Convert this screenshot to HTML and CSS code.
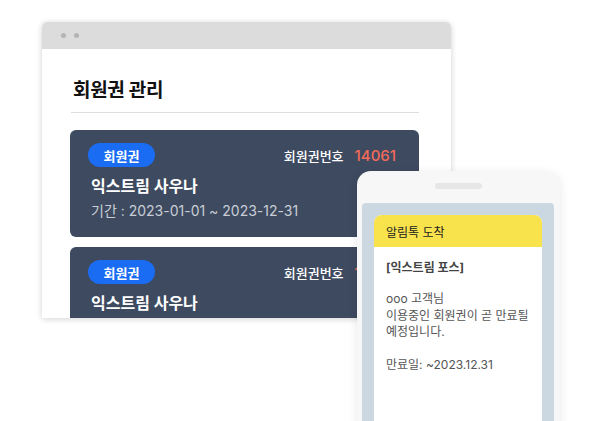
FILE: index.html
```html
<!DOCTYPE html>
<html lang="ko">
<head>
<meta charset="utf-8">
<link rel="stylesheet" href="styles.css">
</head>
<body>
<div class="stage">
  <div class="browser">
    <div class="titlebar"><span class="dot"></span><span class="dot"></span></div>
    <div class="content">
      <h1 class="title">회원권 관리</h1>
      <div class="divider"></div>
      <div class="card">
        <div class="card-top">
          <span class="badge">회원권</span>
          <span class="num-label">회원권번호<b class="num">14061</b></span>
        </div>
        <div class="name">익스트림 사우나</div>
        <div class="period">기간 : 2023-01-01 ~ 2023-12-31</div>
      </div>
      <div class="card">
        <div class="card-top">
          <span class="badge">회원권</span>
          <span class="num-label">회원권번호<b class="num">14061</b></span>
        </div>
        <div class="name">익스트림 사우나</div>
        <div class="period">기간 : 2023-01-01 ~ 2023-12-31</div>
      </div>
    </div>
  </div>
  <div class="phone">
    <div class="notch"></div>
    <div class="screen">
      <div class="msg">
        <div class="msg-head">알림톡 도착</div>
        <div class="msg-body">
          <p class="msg-title">[익스트림 포스]</p>
          <p class="msg-text">ooo 고객님<br>이용중인 회원권이 곧 만료될<br>예정입니다.<br><br>만료일: ~2023.12.31</p>
        </div>
      </div>
    </div>
  </div>
</div>
</body>
</html>
```

FILE: styles.css
```css
* { box-sizing: border-box; }
html, body { margin: 0; padding: 0; background: #fff; }
body { font-family: "Inter", "Noto Sans CJK KR", "Noto Sans", sans-serif; }
.stage { position: relative; width: 592px; height: 421px; overflow: hidden; background: #fff; }

.browser {
  position: absolute; left: 42px; top: 22px; width: 409px; height: 296px;
  background: #fff; border-radius: 5px 5px 0 0; overflow: hidden;
  box-shadow: 0 1px 6px rgba(0,0,0,0.18);
}
.titlebar { height: 27px; background: #dcdcdc; display: flex; align-items: center; gap: 8px; padding-left: 19px; }
.dot { width: 5px; height: 5px; border-radius: 50%; background: #b4b4b4; }
.content { padding: 0 32px 0 28px; }
.title { margin: 30px 0 0 3px; font-size: 19px; line-height: 24px; font-weight: 700; color: #111; letter-spacing: -0.3px; }
.divider { height: 1px; background: #dedede; margin: 9px 0 17px 1px; }

.card { height: 107px; background: #3e4a60; border-radius: 6px; padding: 13px 23px 0 18px; margin-bottom: 10px; color: #fff; }
.card-top { display: flex; justify-content: space-between; align-items: center; height: 24px; }
.badge { width: 67px; height: 24px; border-radius: 12px; background: #1a6cf2; display: flex; align-items: center; justify-content: center; font-size: 13px; font-weight: 700; }
.num-label { font-size: 13px; font-weight: 500; display: flex; align-items: center; }
.num { color: #f26b5b; font-size: 15px; font-weight: 500; margin-left: 11px; }
.name { margin: 8px 0 0 3px; font-size: 16px; line-height: 22px; font-weight: 700; }
.period { margin: 5px 0 0 3px; font-size: 14px; line-height: 18px; color: #c9ced6; }

.phone {
  position: absolute; left: 357px; top: 171px; width: 203px; height: 300px;
  background: #f7f7f7; border-radius: 14px; padding: 12px 6px 0 5px;
  box-shadow: 0 2px 10px rgba(0,0,0,0.10);
}
.notch { width: 47px; height: 6px; border-radius: 3px; background: #e6e6e6; margin: 0 auto 14px; }
.screen { height: 300px; background: #cbd8e1; border-radius: 4px; padding: 12px 12px 0 12px; }
.msg { height: 300px; background: #fff; border-radius: 8px 8px 0 0; overflow: hidden; }
.msg-head { height: 32px; background: #f9e34c; display: flex; align-items: center; padding-left: 12px; font-size: 12px; color: #222; }
.msg-body { padding: 13px 4px 0 12px; }
.msg-title { margin: 0; font-size: 12px; line-height: 16px; font-weight: 700; color: #444; }
.msg-text { margin: 15px 0 0; font-size: 12px; line-height: 16.5px; color: #555; white-space: nowrap; }
```
